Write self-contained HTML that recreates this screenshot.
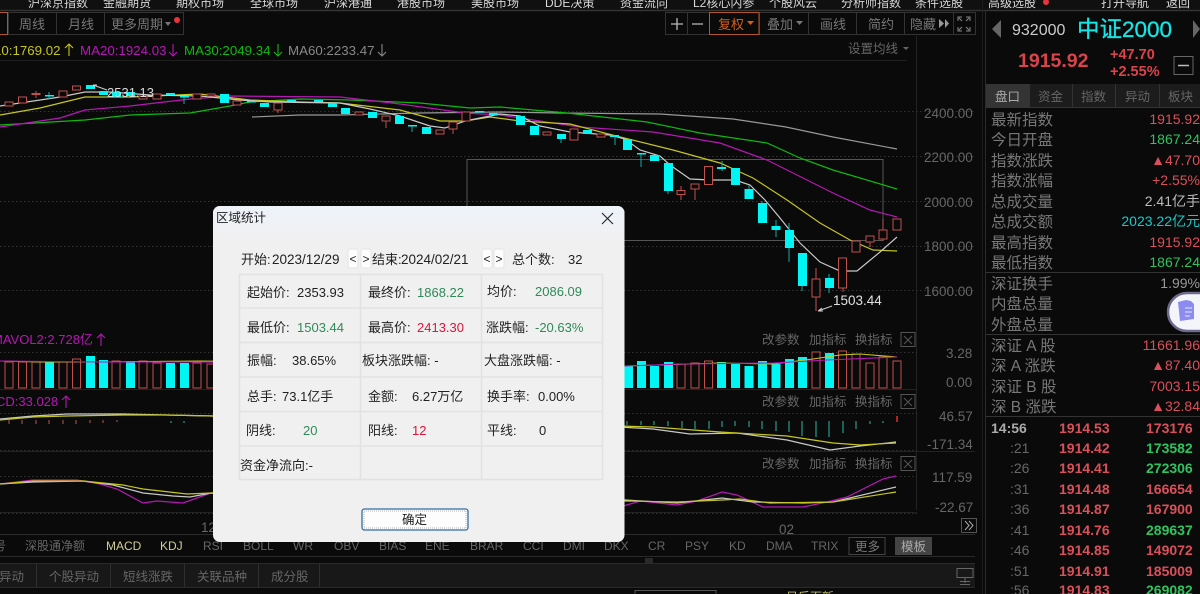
<!DOCTYPE html>
<html><head><meta charset="utf-8"><style>
html,body{margin:0;padding:0;background:#0a0a0a;width:1200px;height:594px;overflow:hidden}
svg{display:block;font-family:"Liberation Sans","Noto Sans CJK SC",sans-serif}
.nav text{fill:#d8d8d8;font-size:12px}
.tb text{fill:#777;font-size:13px}
.ax text{fill:#666;font-size:13.5px}
.hd text{fill:#666;font-size:12.5px}
.tab text{fill:#666;font-size:12px}
.lb text{fill:#777;font-size:15.5px}
.v text{font-size:14px;text-anchor:end}
.tk text{font-size:14px;font-weight:bold}
.r{fill:#d9505a}.g{fill:#2fc35f}
.dl text{font-size:13px;fill:#222}
</style></head><body>
<svg width="1200" height="594" viewBox="0 0 1200 594" xmlns="http://www.w3.org/2000/svg">
<rect width="1200" height="594" fill="#0a0a0a"/>
<!-- top nav -->
<rect width="1200" height="10" fill="#101010"/>
<path d="M0 10.500H1200" stroke="#333" stroke-width="1.500"/>
<g class="nav">
<text x="28" y="7">沪深京指数</text><text x="103" y="7">金融期货</text><text x="176" y="7">期权市场</text><text x="250" y="7">全球市场</text><text x="324" y="7">沪深港通</text><text x="397" y="7">港股市场</text><text x="471" y="7">美股市场</text><text x="545" y="7">DDE决策</text><text x="620" y="7">资金流向</text><text x="693" y="7">L2核心内参</text><text x="769" y="7">个股风云</text><text x="841" y="7">分析师指数</text><text x="915" y="7">条件选股</text><text x="988" y="7">高级选股</text><text x="1101" y="7">打开导航</text><text x="1166" y="7">返回</text>
</g>
<circle cx="1046" cy="2" r="3" fill="#e9343c"/>
<!-- toolbar -->
<g fill="none" stroke="#333"><rect x="8.500" y="12.500" width="175" height="22"/><path d="M56.500 13V34M104.500 13V34"/>
<rect x="665.500" y="12.500" width="310" height="22"/><path d="M687.500 13V34M759.500 13V34M808.500 13V34M856.500 13V34M904.500 13V34M953.500 13V34"/></g>
<rect x="-5" y="12.500" width="12.500" height="22" fill="none" stroke="#b5552a"/>
<rect x="709.500" y="12.500" width="49.500" height="22" fill="none" stroke="#b5552a"/>
<g class="tb">
<text x="19" y="29">周线</text><text x="68" y="29">月线</text><text x="111" y="29">更多周期</text>
<text x="820" y="29">画线</text><text x="868" y="29">简约</text><text x="910" y="29">隐藏</text><text x="767" y="29">叠加</text>
</g>
<text x="718" y="29" font-size="13" fill="#d0601f">复权</text>
<path d="M747 21h7l-3.500 4z" fill="#d0601f"/><path d="M796 21h7l-3.500 4z" fill="#777"/><path d="M165 22h6l-3 4z" fill="#777"/>
<circle cx="177" cy="20" r="3" fill="#e9343c"/>
<path d="M671 24h12M677 18v12M692 24h11" stroke="#bbb" stroke-width="1.300" fill="none"/>
<path d="M939 19l5 4.500-5 4.500zM945 19l4 4.500-4 4.500z" fill="#999"/>
<path d="M959 18l3 3M969 18l-3 3M959 30l3-3M969 30l-3-3M958 21v-4h4M970 21v-4h-4M958 27v4h4M970 27v4h-4" stroke="#888" fill="none"/>
<!-- ma row -->
<g font-size="13.300">
<text x="-6" y="55" fill="#c6c61e">10:1769.02</text>
<text x="80" y="55" fill="#b518b5">MA20:1924.03</text>
<text x="184" y="55" fill="#10b810">MA30:2049.34</text>
<text x="288" y="55" fill="#888">MA60:2233.47</text>
<text x="848" y="53" fill="#666" font-size="12.500">设置均线</text>
</g>
<g fill="none" stroke-width="1.100">
<path d="M69 56V44M65 48l4-4 4 4" stroke="#c6c61e"/>
<path d="M173 44V56M169 52l4 4 4-4" stroke="#b518b5"/>
<path d="M278 44V56M274 52l4 4 4-4" stroke="#10b810"/>
<path d="M382 44V56M378 52l4 4 4-4" stroke="#888"/>
</g>
<path d="M903 47h6l-3 3z" fill="#666"/>
<path d="M0 60.500H907" stroke="#1f1f1f"/>
<path d="M916.500 36V510" stroke="#222"/>
<!-- gridlines -->
<g stroke="#333" stroke-dasharray="1.500 2.500"><path d="M0 156.500H975M0 111.500H975M0 201.500H975M0 246.500H975M0 290.500H975M0 352.500H917M0 413.500H917M0 450.500H917M0 476.500H917M0 513.500H917"/></g>
<g class="ax"><text x="924" y="118">2400.00</text><text x="924" y="162">2200.00</text><text x="924" y="207">2000.00</text><text x="924" y="251">1800.00</text><text x="924" y="296">1600.00</text>
<text x="946" y="358">3.28</text><text x="946" y="387">0.00</text><text x="939" y="421">46.57</text><text x="927" y="449">-171.34</text><text x="932" y="482">117.59</text><text x="935" y="512">-22.67</text></g>
<!-- selection rect -->
<rect x="467" y="159.500" width="416" height="81" fill="none" stroke="#555"/>
<!-- MAs -->
<g fill="none" stroke-width="1.200">
<polyline stroke="#999" points="252,117 300,115 340,115 420,113 500,112 560,113 660,114 733,119 786,127 833,137 897,149"/>
<polyline stroke="#10b810" points="0,125 85,120 130,115 190,113 230,106 250,102 300,99 350,100 420,103 470,108 500,107 567,113 647,122 700,133 767,143 800,158 833,170 897,189"/>
<polyline stroke="#b518b5" points="0,127 60,118 85,110 130,106 190,99 230,96 340,97 400,104 465,113 500,115 580,127 653,132 720,143 767,160 793,173 833,193 870,210 897,217"/>
<polyline stroke="#c6c61e" points="0,115 40,108 85,97 130,97 200,94 250,100 300,102 340,103 400,110 440,121 465,121 490,117 520,121 570,124 620,137 673,150 720,163 753,178 787,200 820,223 850,240 873,250 897,251"/>
<polyline stroke="#c8c8c8" points="0,106 60,97 85,92 110,92 150,95 200,96 240,100 270,102 340,103 370,109 400,116 430,126 445,128 465,121 500,114 520,116 540,126 570,132 610,135 625,139 640,150 660,156 670,165 690,179 710,180 735,180 750,185 765,200 780,218 800,243 820,262 840,271 857,271 880,252 897,237"/>
</g>
<!-- candles red -->
<g fill="#0a0a0a" stroke="#c0504d">
<path d="M36 91V98M278 110V113M386 121V128M453 129V134M681 186V200M695 189V200M843 288V292M816 268V311M870 242V247M883 219V241"/>
<rect x="5" y="102" width="8" height="4"/><rect x="18.500" y="97" width="8" height="6"/><rect x="32" y="93.500" width="8" height="1"/><rect x="59" y="91" width="8" height="6"/><rect x="72.500" y="86" width="8" height="4"/><rect x="139" y="96" width="8" height="3"/><rect x="153" y="94" width="8" height="5"/><rect x="193" y="94" width="8" height="5"/><rect x="207" y="94" width="8" height="2"/><rect x="233" y="101" width="8" height="4"/><rect x="274" y="103" width="8" height="7"/><rect x="355" y="112" width="8" height="3"/><rect x="382" y="116" width="8" height="5"/><rect x="436" y="130" width="8" height="4"/><rect x="449" y="122" width="8" height="7"/><rect x="462" y="112" width="8" height="9"/>
<rect x="543" y="132" width="8" height="3"/><rect x="570" y="129" width="8" height="11"/><rect x="597" y="134" width="8" height="3"/><rect x="677" y="190.500" width="8" height="4"/><rect x="691" y="184" width="8" height="5"/><rect x="704.500" y="166.500" width="8" height="18"/><rect x="812" y="279" width="8" height="18"/><rect x="838.500" y="258" width="8" height="30"/><rect x="852" y="241" width="8" height="11"/><rect x="866" y="236" width="8" height="6"/><rect x="879" y="230" width="8" height="9"/><rect x="893" y="219" width="8" height="11"/>
</g>
<!-- candles cyan -->
<g fill="#00f5f5" stroke="none">
<path d="M48.500 92h1v7h-1zM183.500 96h1v8h-1zM411.500 125h1v7h-1zM560.500 138h1v5h-1zM614.500 135h1v10h-1zM640.500 153h1v14h-1zM721.500 161h1v10h-1zM748.500 185h1v5h-1zM761.500 201h1v3h-1zM775.500 220h1v17h-1zM788.500 223h1v39h-1zM801.500 285h1v6h-1zM828.500 274h1v19h-1zM667.500 190h1v4h-1z" fill="#18a8a8"/>
<rect x="45" y="95" width="9" height="1.500"/><rect x="86" y="85" width="9" height="4"/><rect x="99" y="91" width="9" height="4"/><rect x="112" y="92" width="9" height="5"/><rect x="126" y="92" width="9" height="4"/><rect x="166" y="93" width="9" height="2"/><rect x="180" y="96" width="9" height="1.500"/><rect x="220" y="94" width="9" height="9"/><rect x="247" y="101" width="9" height="1.500"/><rect x="260" y="103" width="9" height="4"/><rect x="287" y="100" width="9" height="1.500"/><rect x="314" y="100" width="9" height="2"/><rect x="328" y="103" width="9" height="4"/><rect x="341" y="108" width="9" height="6"/><rect x="368" y="112" width="9" height="6"/><rect x="395" y="116" width="9" height="8"/><rect x="408" y="125" width="9" height="1.500"/><rect x="422" y="127" width="9" height="7"/><rect x="475" y="111" width="9" height="1.500"/><rect x="489" y="113" width="9" height="2"/><rect x="516" y="116" width="9" height="9"/><rect x="530" y="126" width="9" height="9"/><rect x="557" y="134" width="9" height="5"/><rect x="583" y="130" width="9" height="4"/><rect x="610" y="135" width="9" height="2"/><rect x="623" y="139" width="9" height="11"/><rect x="637" y="153" width="9" height="1.500"/><rect x="650" y="155" width="9" height="6"/><rect x="664" y="163" width="9" height="28"/><rect x="717" y="167" width="9" height="2"/><rect x="731" y="168" width="9" height="17"/><rect x="744.500" y="189" width="9" height="10"/><rect x="758" y="203" width="9" height="20"/><rect x="771.500" y="226" width="9" height="4"/><rect x="785" y="230" width="9" height="18"/><rect x="798" y="253" width="9" height="33"/><rect x="825" y="278" width="9" height="10"/>
</g>
<!-- annotations -->
<text x="107" y="97" font-size="13" fill="#d8d8d8">2531.13</text>
<path d="M93 85L107 90M93 85l4 0M93 85l2 3" stroke="#ccc" fill="none"/>
<text x="833" y="305" font-size="13.500" fill="#e0e0e0">1503.44</text>
<path d="M832 306L818 311M818 311l4-3M818 311l5 0" stroke="#ccc" fill="none"/>
<!-- subpanel labels -->
<g font-size="13"><text x="-8" y="344" fill="#b518b5">MAVOL2:2.728亿</text><text x="-4" y="406" fill="#b518b5">CD:33.028</text></g>
<path d="M101 346V334M97 338l4-4 4 4M66 408V396M62 400l4-4 4 4" stroke="#b518b5" fill="none" stroke-width="1.100"/>
<g class="hd"><text x="762" y="344">改参数</text><text x="809" y="344">加指标</text><text x="855" y="344">换指标</text><text x="762" y="406">改参数</text><text x="809" y="406">加指标</text><text x="855" y="406">换指标</text><text x="762" y="468">改参数</text><text x="809" y="468">加指标</text><text x="855" y="468">换指标</text></g>
<g fill="none" stroke="#555"><rect x="901" y="332.500" width="14" height="14"/><path d="M904 336l8 8M912 336l-8 8"/><rect x="901" y="394.500" width="14" height="14"/><path d="M904 398l8 8M912 398l-8 8"/><rect x="901" y="456.500" width="14" height="14"/><path d="M904 460l8 8M912 460l-8 8"/></g>
<path d="M0 389.500H917M0 451.500H917M0 512.500H917M917 451.500H975" stroke="#222"/>
<!-- volume bars -->
<g fill="#0a0a0a" stroke="#c0504d"><rect x="5" y="362" width="8" height="26"/><rect x="18.500" y="362" width="8" height="26"/><rect x="32" y="362" width="8" height="26"/><rect x="59" y="362" width="8" height="26"/><rect x="72.500" y="359" width="8" height="29"/><rect x="112" y="361" width="8" height="27"/><rect x="139" y="361" width="8" height="27"/><rect x="153" y="363" width="8" height="25"/><rect x="193" y="363" width="8" height="25"/><rect x="207" y="364" width="8" height="24"/>
<rect x="677" y="364" width="8" height="24"/><rect x="691" y="363" width="8" height="25"/><rect x="704.500" y="361" width="8" height="27"/><rect x="812" y="352" width="8" height="36"/><rect x="838.500" y="351" width="8" height="37"/><rect x="852" y="354" width="8" height="34"/><rect x="866" y="363" width="8" height="25"/><rect x="879" y="357" width="8" height="31"/><rect x="893" y="361" width="8" height="27"/></g>
<g fill="#00f5f5"><rect x="45" y="362" width="9" height="26"/><rect x="86" y="356" width="9" height="32"/><rect x="99" y="360" width="9" height="28"/><rect x="126" y="361" width="9" height="27"/><rect x="166" y="363" width="9" height="25"/><rect x="180" y="363" width="9" height="25"/>
<rect x="624" y="366" width="9" height="22"/><rect x="637" y="361" width="9" height="27"/><rect x="650" y="366" width="9" height="22"/><rect x="664" y="362" width="9" height="26"/><rect x="717" y="362" width="9" height="26"/><rect x="731" y="363" width="9" height="25"/><rect x="744.500" y="366" width="9" height="22"/><rect x="758" y="361" width="9" height="27"/><rect x="771.500" y="364" width="9" height="24"/><rect x="785" y="359" width="9" height="29"/><rect x="798" y="357" width="9" height="31"/><rect x="825" y="353" width="9" height="35"/></g>
<g fill="none" stroke-width="1.100">
<polyline stroke="#c6c61e" points="0,361 40,362 100,362 200,361 625,366 720,363 773,364 813,359 840,355 860,354 897,357"/>
<polyline stroke="#b518b5" points="0,361 100,362 200,362 625,366 683,364 773,363 827,360 897,357"/>
</g>
<!-- MACD -->
<g stroke="#2fb8a0" fill="none"><path d="M171 421v2M184 421v2M627 421v4M641 421v4M654 421v4M668 421v5M682 421v7M695 421v8M709 421v8M722 421v6M735 421v5M749 421v6M762 421v8M776 421v10M789 421v11M802 421v15M816 421v16M829 421v16M843 421v12M856 421v8M870 421v3M883 421v2"/>
<path d="M9 420v4M22 420v4M36 420v4M49 420v4M63 420v4M76 420v4M90 420v3M103 420v3M117 420v2" stroke="#b55"/>
<path d="M897 416v6" stroke="#e33" stroke-width="1.400"/></g>
<g fill="none" stroke-width="1.200">
<polyline stroke="#c8c8c8" points="0,419 33,416 67,414 124,414 167,415 213,416 620,427 653,429 690,434 737,433 787,440 830,450 860,446 896,442"/>
<polyline stroke="#c6c61e" points="0,420 33,417 67,416 124,415 167,415 213,416 620,426 653,427 720,432 787,436 833,443 860,445 896,443"/>
<!-- KDJ -->
<polyline stroke="#b518b5" points="0,484 17,482 33,480 77,480 100,484 117,489 143,503 157,501 183,503 211,493 620,507 640,501 677,505 697,501 722,492 737,495 763,507 803,507 827,502 847,497 883,479 896,476"/>
<polyline stroke="#c8c8c8" points="0,484 33,482 83,481 113,485 143,493 173,496 190,497 211,493 625,500 677,503 722,498 753,502 803,503 833,502 896,487"/>
<polyline stroke="#c6c61e" points="0,484 33,481 83,481 123,485 143,489 187,494 211,493 625,501 677,502 722,500 740,499 770,503 833,502 896,492"/>
</g>
<!-- date axis -->
<text x="201" y="532" font-size="13.500" fill="#666">12</text><text x="779" y="534" font-size="13.500" fill="#666">02</text>
<rect x="961.500" y="518.500" width="15" height="14" fill="none" stroke="#555"/>
<path d="M965 521l4 4.500-4 4.500M969 521l4 4.500-4 4.500" stroke="#aaa" fill="none"/>
<path d="M0 534.500H975M0 556.500H975M0 563.500H975M0 587.500H975" stroke="#2a2a2a"/>
<!-- indicator tabs -->
<g class="tab"><text x="-6" y="550">号</text><text x="25" y="550">深股通净额</text>
<text x="203" y="550">RSI</text><text x="243" y="550">BOLL</text><text x="293" y="550">WR</text><text x="334" y="550">OBV</text><text x="379" y="550">BIAS</text><text x="425" y="550">ENE</text><text x="470" y="550">BRAR</text><text x="523" y="550">CCI</text><text x="563" y="550">DMI</text><text x="604" y="550">DKX</text><text x="648" y="550">CR</text><text x="685" y="550">PSY</text><text x="729" y="550">KD</text><text x="766" y="550">DMA</text><text x="811" y="550">TRIX</text></g>
<g fill="#cfcf9a" font-size="12"><text x="106" y="550">MACD</text><text x="160" y="550">KDJ</text></g>
<rect x="849" y="537.500" width="36" height="17" fill="none" stroke="#444"/>
<text x="855" y="551" font-size="12.500" fill="#777">更多</text>
<rect x="895" y="537" width="37" height="18" fill="#444"/>
<text x="901" y="551" font-size="12.500" fill="#aaa">模板</text>
<rect x="645" y="558" width="8" height="5" fill="#2a2a2a"/>
<!-- bottom tabs -->
<rect x="0" y="564" width="975" height="23" fill="#181818"/>
<g font-size="12.500" fill="#666"><text x="-1" y="581">异动</text><text x="49" y="581">个股异动</text><text x="123" y="581">短线涨跌</text><text x="197" y="581">关联品种</text><text x="271" y="581">成分股</text></g>
<path d="M36.500 564V587M110.500 564V587M184.500 564V587M258.500 564V587M319.500 564V587" stroke="#2f2f2f"/>
<g fill="none" stroke="#666"><rect x="957" y="568.500" width="16" height="9"/><path d="M960 581.500h10M960 584.500h10M965 577v6"/></g>
<path d="M635 593.500V590.500H716V593.500" fill="none" stroke="#555"/>
<g font-size="12" fill="#b8b860"><text x="786" y="601">日后面新</text></g>
<path d="M982.500 0V594" stroke="#1c1c1c"/>
<path d="M985.500 10V594" stroke="#2a2a2a"/>
<!-- right header -->
<path d="M1001 20v18l-9-9zM1193 20v18l7 -9z" fill="#666"/>
<text x="1012" y="35" font-size="16" fill="#ccc">932000</text>
<text x="1077" y="37" font-size="22.500" fill="#12e6e6" stroke="#12e6e6" stroke-width="0.300">中证2000</text>
<text x="1018" y="67" font-size="19.500" font-weight="bold" fill="#d9444c">1915.92</text>
<text x="1110" y="59" font-size="14.500" font-weight="bold" fill="#d9444c">+47.70</text>
<text x="1110" y="76" font-size="14.500" font-weight="bold" fill="#d9444c">+2.55%</text>
<rect x="1174" y="56.500" width="19" height="18" fill="none" stroke="#666"/>
<path d="M1178 65.500h11" stroke="#bbb" stroke-width="1.500"/>
<!-- right tabs -->
<rect x="986" y="84" width="214" height="23" fill="#1c1c1c"/>
<rect x="986" y="84" width="43" height="23" fill="#343434"/>
<path d="M986 107.500H1200M1029.500 84V107M1072.500 84V107M1115.500 84V107M1159.500 84V107" stroke="#333"/>
<g font-size="12.500" fill="#666"><text x="1038" y="101">资金</text><text x="1081" y="101">指数</text><text x="1125" y="101">异动</text><text x="1168" y="101">板块</text></g>
<text x="995" y="101" font-size="12.500" fill="#aaa">盘口</text>
<path d="M986 272.500H1200M986 334.500H1200M986 416.500H1200" stroke="#333"/>
<g class="lb">
<text x="991" y="125">最新指数</text><text x="991" y="145">今日开盘</text><text x="991" y="166">指数涨跌</text><text x="991" y="186">指数涨幅</text><text x="991" y="207">总成交量</text><text x="991" y="227">总成交额</text><text x="991" y="248">最高指数</text><text x="991" y="268">最低指数</text>
<text x="991" y="289">深证换手</text><text x="991" y="309">内盘总量</text><text x="991" y="330">外盘总量</text>
<text x="991" y="351">深证 A 股</text><text x="991" y="371">深 A 涨跌</text><text x="991" y="392">深证 B 股</text><text x="991" y="412">深 B 涨跌</text>
</g>
<g class="v">
<text x="1200" y="124" class="r">1915.92</text><text x="1200" y="144" class="g">1867.24</text><text x="1200" y="165" class="r">▲47.70</text><text x="1200" y="185" class="r">+2.55%</text><text x="1200" y="206" fill="#bbb">2.41亿手</text><text x="1200" y="226" fill="#18c8c8">2023.22亿元</text><text x="1200" y="247" class="r">1915.92</text><text x="1200" y="267" class="g">1867.24</text>
<text x="1200" y="288" fill="#999">1.99%</text>
<text x="1200" y="350" class="r">11661.96</text><text x="1200" y="370" class="r">▲87.40</text><text x="1200" y="391" class="r">7003.15</text><text x="1200" y="411" class="r">▲32.84</text>
</g>
<!-- floating pill -->
<rect x="1168" y="293" width="50" height="38" rx="19" fill="#f4f4fb" stroke="#6e6a8e" stroke-width="2.500"/>
<path d="M1178 302l8-2 5 1 3 3v15l-14 2z" fill="#8c8cf0"/><path d="M1185 308h7M1185 312h7M1185 316h5" stroke="#e8e8ff"/>
<!-- ticks -->
<g class="tk">
<text x="991" y="433" fill="#aaa">14:56</text><text x="1059" y="433" class="r">1914.53</text><text x="1146" y="433" class="r">173176</text>
<text x="1059" y="453" class="r">1914.42</text><text x="1146" y="453" class="g">173582</text>
<text x="1059" y="473" class="r">1914.41</text><text x="1146" y="473" class="g">272306</text>
<text x="1059" y="494" class="r">1914.48</text><text x="1146" y="494" class="r">166654</text>
<text x="1059" y="514" class="r">1914.87</text><text x="1146" y="514" class="r">167900</text>
<text x="1059" y="535" class="r">1914.76</text><text x="1146" y="535" class="g">289637</text>
<text x="1059" y="555" class="r">1914.85</text><text x="1146" y="555" class="r">149072</text>
<text x="1059" y="576" class="r">1914.91</text><text x="1146" y="576" class="r">185009</text>
<text x="1059" y="595" class="r">1914.83</text><text x="1146" y="595" class="g">269082</text>
</g>
<g font-size="14" fill="#666"><text x="1010" y="453">:21</text><text x="1010" y="473">:26</text><text x="1010" y="494">:31</text><text x="1010" y="514">:36</text><text x="1010" y="535">:41</text><text x="1010" y="555">:46</text><text x="1010" y="576">:51</text><text x="1010" y="595">:56</text></g>
<!-- dialog -->
<defs><linearGradient id="tg" x1="0" y1="0" x2="0" y2="1"><stop offset="0" stop-color="#eef3fa"/><stop offset="1" stop-color="#f0f0f0"/></linearGradient></defs>
<rect x="213" y="206" width="411.500" height="336" rx="7" fill="#f0f0f0"/>
<path d="M213 240v-27a7 7 0 0 1 7-7h397.500a7 7 0 0 1 7 7v27z" fill="url(#tg)"/>
<g class="dl">
<text x="216" y="222" style="font-size:12.500px">区域统计</text>
<path d="M602 213l11 11M613 213l-11 11" stroke="#222" stroke-width="1.100" fill="none"/>
<g fill="#fdfdfd" stroke="#e4e4e4"><rect x="348" y="249" width="10" height="19" rx="2"/><rect x="361" y="249" width="10" height="19" rx="2"/><rect x="482" y="249" width="10" height="19" rx="2"/><rect x="494" y="249" width="10" height="19" rx="2"/></g>
<text x="349.500" y="263" style="font-size:12px">&lt;</text><text x="362.500" y="263" style="font-size:12px">&gt;</text><text x="483.500" y="263" style="font-size:12px">&lt;</text><text x="495.500" y="263" style="font-size:12px">&gt;</text>
<text x="241" y="264">开始:</text><text x="272" y="264" style="font-size:13.500px">2023/12/29</text><text x="372" y="264">结束:</text><text x="401" y="264" style="font-size:13.500px">2024/02/21</text><text x="512" y="264">总个数:</text><text x="568" y="264">32</text>
<g fill="none" stroke="#e2e2e2" stroke-width="1.500"><rect x="239.500" y="274.500" width="363" height="205"/><path d="M360.500 275V479M481.500 275V479M240 308H602M240 342.500H602M240 377H602M240 411.500H602M240 446H602"/></g>
<text x="247" y="297">起始价:</text><text x="297" y="297">2353.93</text><text x="368" y="297">最终价:</text><text x="417" y="297" style="fill:#2e8b57">1868.22</text><text x="487" y="296">均价:</text><text x="535" y="296" style="fill:#2e8b57">2086.09</text>
<text x="247" y="332">最低价:</text><text x="297" y="332" style="fill:#2e8b57">1503.44</text><text x="368" y="332">最高价:</text><text x="417" y="332" style="fill:#dc143c">2413.30</text><text x="486" y="332">涨跌幅:</text><text x="535" y="332" style="fill:#2e8b57">-20.63%</text>
<text x="247" y="365">振幅:</text><text x="292" y="365">38.65%</text><text x="362" y="365">板块涨跌幅: -</text><text x="484" y="365">大盘涨跌幅: -</text>
<text x="247" y="401">总手:</text><text x="282" y="401">73.1亿手</text><text x="368" y="401">金额:</text><text x="412" y="401">6.27万亿</text><text x="487" y="401">换手率:</text><text x="538" y="401">0.00%</text>
<text x="246" y="435">阴线:</text><text x="303" y="435" style="fill:#2e8b57">20</text><text x="368" y="435">阳线:</text><text x="412" y="435" style="fill:#dc143c">12</text><text x="487" y="435">平线:</text><text x="539" y="435">0</text>
<text x="240" y="470">资金净流向:-</text>
<rect x="362" y="509" width="106" height="21" rx="2.500" fill="#fdfdfd" stroke="#2f6ea5" stroke-width="1.300"/>
<rect x="364" y="511" width="102" height="17" fill="none" stroke="#666" stroke-dasharray="1 1" stroke-width="0.500"/>
<text x="402" y="524" style="font-size:12.500px">确定</text>
</g>
</svg>
</body></html>
